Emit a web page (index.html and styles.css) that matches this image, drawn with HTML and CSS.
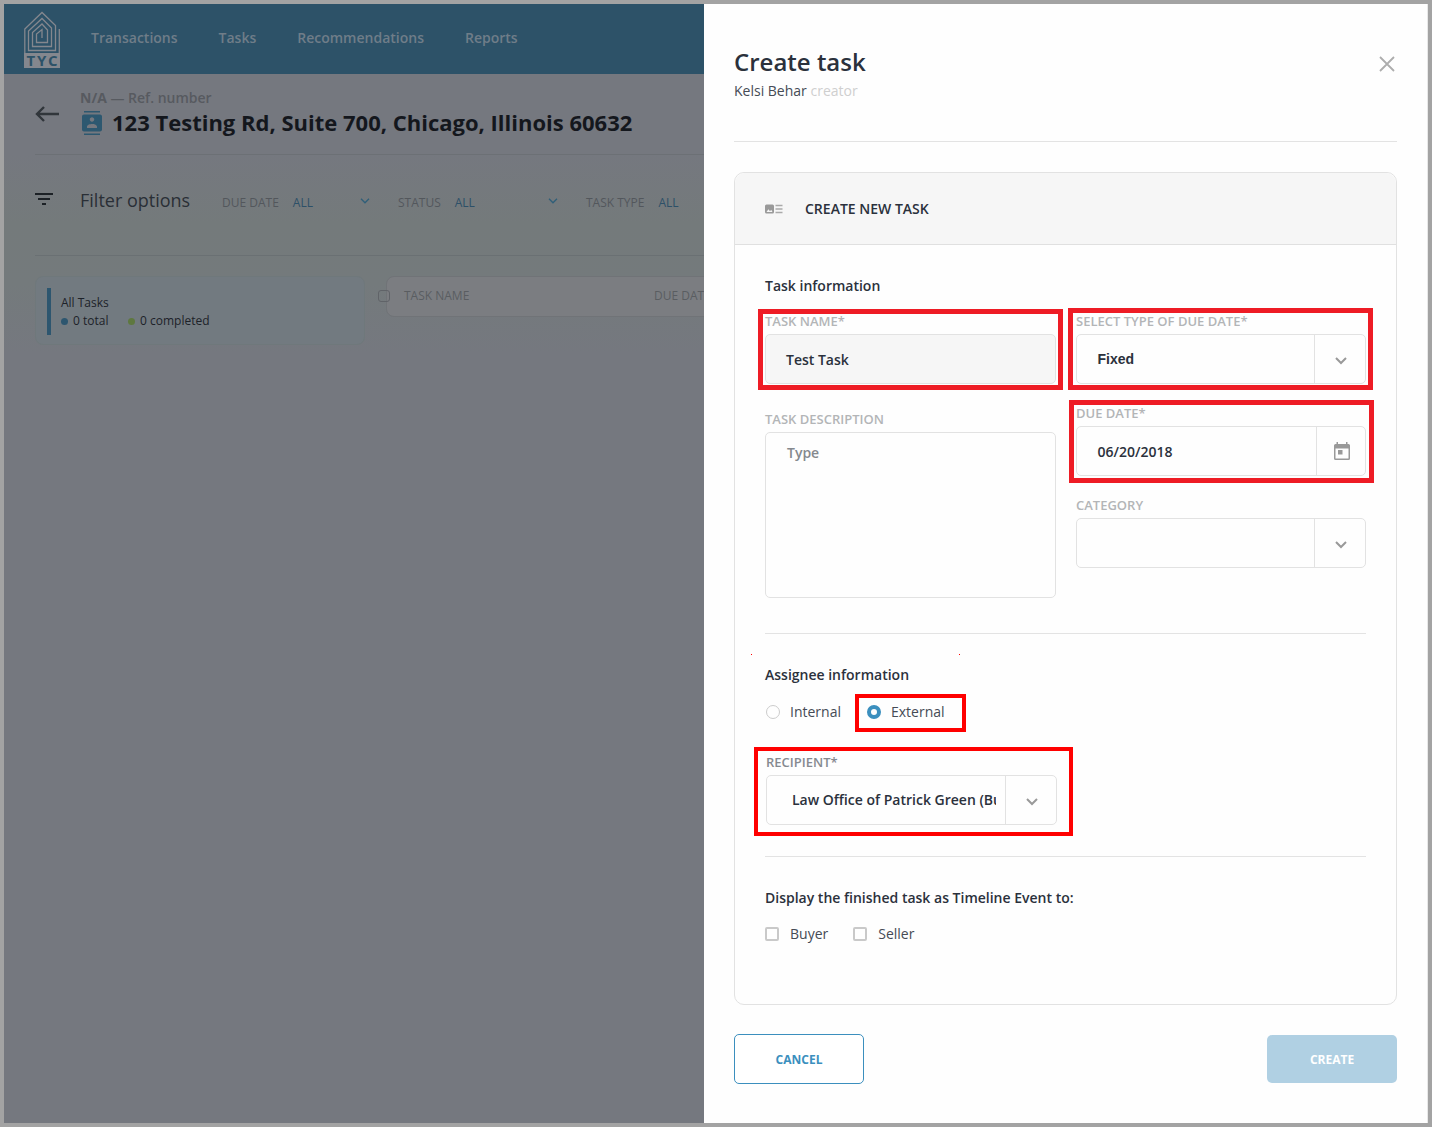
FILE: index.html
```html
<!DOCTYPE html>
<html lang="en">

<head>
    <meta charset="UTF-8">
    <meta name="viewport" content="width=device-width, initial-scale=1.0">
    <title>Create task</title>
    <link rel="stylesheet" href="styles.css">
</head>

<body>

    <div class="page">
        <main class="main">
            <nav class="nav">
                <svg class="logo" width="36" height="58" viewBox="0 0 36 58">
                    <g fill="none" stroke="#84878e" stroke-width="1.3">
                        <path d="M.8 43V18L18 1.500 31.500 14.500V39.500H4.500V20L18 7.500 27.500 17V35.500H8.500V21.500L18 13 23.500 19V31.500H12.500V23L18 18.500V27" />
                        <path d="M35.300 18V43" />
                    </g>
                    <rect y="42" width="36" height="15" fill="#84878e" />
                    <text x="2.500" y="55" textLength="31" class="logo-text">TYC</text>
                </svg>
                <a class="nav-item">Transactions</a>
                <a class="nav-item">Tasks</a>
                <a class="nav-item">Recommendations</a>
                <a class="nav-item">Reports</a>
            </nav>

            <header class="heading">
                <svg class="back" width="25" height="18" viewBox="0 0 25 18">
                    <path d="M9 2L2 9l7 7M2 9h22" fill="none" stroke="#31363b" stroke-width="2.400" />
                </svg>
                <div>
                    <div class="ref"><b>N/A</b> — Ref. number</div>
                    <div class="address">
                        <svg width="24" height="24" viewBox="0 0 24 24">
                            <path d="M20 0H4v1.500h16V0zM4 24h16v-1.500H4V24zM20 3.500H4c-1.100 0-2 .9-2 2v13c0 1.100.9 2 2 2h16c1.100 0 2-.9 2-2v-13c0-1.100-.9-2-2-2zm-8 2.750c1.240 0 2.250 1.010 2.250 2.250s-1.010 2.250-2.250 2.250S9.750 9.740 9.750 8.500 10.760 6.250 12 6.250zM17 17H7v-1.500c0-1.670 3.330-2.500 5-2.500s5 .83 5 2.500V17z" fill="#2d5870" />
                        </svg>
                        <span>123 Testing Rd, Suite 700, Chicago, Illinois 60632</span>
                    </div>
                </div>
            </header>

            <section class="filters">
                <svg class="filter-icon" width="18" height="12" viewBox="0 0 18 12">
                    <path d="M0 0h18v2H0zM3 5h12v2H3zM7 10h4v2H7z" fill="#1c2126" />
                </svg>
                <span class="filter-title">Filter options</span>
                <div class="filter filter-due"><span>DUE DATE</span><b>ALL</b>
                    <svg width="10" height="6" viewBox="0 0 10 6"><path d="M1 .8l4 4 4-4" /></svg>
                </div>
                <div class="filter filter-status"><span>STATUS</span><b>ALL</b>
                    <svg width="10" height="6" viewBox="0 0 10 6"><path d="M1 .8l4 4 4-4" /></svg>
                </div>
                <div class="filter"><span>TASK TYPE</span><b>ALL</b></div>
            </section>

            <section class="tasks">
                <div class="summary">
                    <div class="summary-bar"></div>
                    <div>
                        <div>All Tasks</div>
                        <div class="counts">
                            <i class="dot"></i><span class="total">0 total</span>
                            <i class="dot dot-green"></i><span>0 completed</span>
                        </div>
                    </div>
                </div>
                <div class="table-head">
                    <i class="table-check"></i>
                    <span class="col-name">TASK NAME</span>
                    <span>DUE DATE</span>
                </div>
            </section>
        </main>

        <aside class="panel">
            <header class="panel-head">
                <div>
                    <h1>Create task</h1>
                    <div class="creator">Kelsi Behar <span>creator</span></div>
                </div>
                <svg class="close" width="16" height="16" viewBox="0 0 16 16">
                    <path d="M1 1l14 14M15 1L1 15" fill="none" stroke="#adadad" stroke-width="1.800" />
                </svg>
            </header>

            <div class="card">
                <div class="card-head">
                    <svg width="18" height="10" viewBox="0 0 18 10">
                        <path d="M1.500.5h6Q9 .5 9 2v6q0 1.500-1.500 1.500h-6Q0 9.500 0 8V2Q0 .5 1.500.5zM1.500 8h6L6.200 5.800 5 7.200 3.400 5.300z" fill="#999" fill-rule="evenodd" />
                        <path d="M10.500 1.500h7M10.500 5h7M10.500 8.500h7" stroke="#aaa" stroke-width="1.500" />
                    </svg>
                    <span>CREATE NEW TASK</span>
                </div>

                <div class="card-body">
                    <h2>Task information</h2>
                    <div class="columns">
                        <div class="column column-left">
                            <div class="field">
                                <label>TASK NAME*</label>
                                <div class="input input-filled">Test Task</div>
                                <div class="mark mark-name"></div>
                            </div>
                            <div class="field">
                                <label>TASK DESCRIPTION</label>
                                <div class="input textarea">Type</div>
                            </div>
                        </div>
                        <div class="column column-right">
                            <div class="field">
                                <label>SELECT TYPE OF DUE DATE*</label>
                                <div class="input">
                                    <span class="value value-fixed">Fixed</span>
                                    <span class="addon"><svg width="12" height="8" viewBox="0 0 12 8"><path d="M1 1l5 5 5-5" class="chevron" /></svg></span>
                                </div>
                                <div class="mark mark-type"></div>
                            </div>
                            <div class="field">
                                <label>DUE DATE*</label>
                                <div class="input">
                                    <span class="value">06/20/2018</span>
                                    <span class="addon addon-date"><svg width="16" height="18" viewBox="0 0 16 18">
                                        <path d="M14.500 2H13.500V0h-1.500v2H4V0H2.500v2H1.500Q0 2 0 3.500v13Q0 18 1.500 18h13q1.500 0 1.500-1.500v-13Q16 2 14.500 2zm0 14.500h-13V6.500h13zM4 8h4.500v4.500H4z" fill="#999" fill-rule="evenodd" /></svg></span>
                                </div>
                                <div class="mark mark-date"></div>
                            </div>
                            <div class="field">
                                <label>CATEGORY</label>
                                <div class="input">
                                    <span class="value"></span>
                                    <span class="addon"><svg width="12" height="8" viewBox="0 0 12 8"><path d="M1 1l5 5 5-5" class="chevron" /></svg></span>
                                </div>
                            </div>
                        </div>
                    </div>

                    <div class="group group-assignee">
                        <i class="speck speck-left"></i>
                        <i class="speck speck-right"></i>
                        <h2>Assignee information</h2>
                        <div class="options radios">
                            <div class="option"><i class="radio"></i>Internal</div>
                            <div class="option"><i class="radio radio-on"></i>External
                                <div class="mark mark-external"></div>
                            </div>
                        </div>
                        <div class="field recipient">
                            <label>RECIPIENT*</label>
                            <div class="input">
                                <span class="value value-recipient"><span>Law Office of Patrick Green (Bu</span></span>
                                <span class="addon"><svg width="12" height="8" viewBox="0 0 12 8"><path d="M1 1l5 5 5-5" class="chevron" /></svg></span>
                            </div>
                            <div class="mark mark-recipient"></div>
                        </div>
                    </div>

                    <div class="group group-display">
                        <h2>Display the finished task as Timeline Event to:</h2>
                        <div class="options checks">
                            <div class="option"><i class="checkbox"></i>Buyer</div>
                            <div class="option"><i class="checkbox"></i>Seller</div>
                        </div>
                    </div>
                </div>
            </div>

            <footer class="actions">
                <button class="btn btn-cancel">CANCEL</button>
                <button class="btn btn-create">CREATE</button>
            </footer>
        </aside>
    </div>

</body>

</html>
```

FILE: styles.css
```css
* {
    margin: 0;
    padding: 0;
    box-sizing: border-box;
}

body {
    font-family: "Open Sans", "Noto Sans", sans-serif;
    font-size: 14px;
    color: #2b313c;
}

svg {
    display: block;
    flex: none;
}

.page {
    display: flex;
    width: 1432px;
    height: 1127px;
    border: 4px solid #a3a3a3;
    overflow: hidden;
}

/* dimmed page behind the panel */
.main {
    width: 700px;
    overflow: hidden;
    background: linear-gradient(#75787f 150px, #747a7b 220px, #747a7c 280px, #75787f 350px);
}

.nav {
    display: flex;
    align-items: center;
    gap: 41px;
    height: 70px;
    padding-left: 20px;
    background: #2d5268;
}

.logo {
    margin: 2px -10px 0 0;
}

.logo-text {
    font-size: 15px;
    font-weight: 700;
    fill: #2d5268;
}

.nav-item {
    font-weight: 600;
    color: #6f7d88;
    margin-top: -4px;
}

.heading {
    display: flex;
    height: 81px;
    margin-left: 31px;
    padding-top: 14px;
    border-bottom: 1px solid #6c7075;
}

.back {
    margin: 17px 20px 0 0;
}

.ref {
    line-height: 20px;
    color: #575a60;
    font-weight: 600;
}

.ref b {
    font-weight: 700;
}

.address {
    display: flex;
    align-items: center;
    gap: 8px;
    height: 30px;
    font-size: 22px;
    font-weight: 700;
    color: #14171d;
    white-space: nowrap;
}

.address span {
    margin-top: -2px;
}

.filters {
    display: flex;
    align-items: center;
    height: 101px;
    margin-left: 31px;
    padding-bottom: 9px;
    border-bottom: 1px solid #6a7073;
    white-space: nowrap;
}

.filter-icon {
    margin: -4px 27px 0 0;
}

.filter-title {
    width: 142px;
    margin-top: -2px;
    font-size: 18px;
    color: #2a2f36;
}

.filter {
    display: flex;
    align-items: center;
    padding-top: 4px;
    font-size: 12px;
    color: #53575c;
}

.filter b {
    margin-left: 14px;
    font-weight: 400;
    color: #2d5068;
}

.filter svg {
    margin: -3px 0 0 auto;
    fill: none;
    stroke: #2f5f79;
    stroke-width: 1.3;
}

.filter-due {
    width: 148px;
    margin-right: 28px;
}

.filter-status {
    width: 160px;
    margin-right: 28px;
}

.tasks {
    display: flex;
    align-items: flex-start;
    gap: 21px;
    padding: 20px 0 0 31px;
}

.summary {
    display: flex;
    flex: none;
    gap: 10px;
    width: 330px;
    height: 69px;
    padding: 11px;
    border: 1px solid #6f787b;
    border-radius: 8px;
    background: #727a80;
    font-size: 12px;
    line-height: 18px;
    color: #1d2229;
}

.summary > div:last-child {
    padding-top: 6px;
}

.summary-bar {
    width: 4px;
    height: 47px;
    background: #2d566f;
}

.counts {
    display: flex;
    align-items: center;
}

.dot {
    width: 7px;
    height: 7px;
    margin-right: 5px;
    border-radius: 50%;
    background: #2d566f;
}

.dot-green {
    background: #5e783f;
}

.total {
    width: 55px;
}

.table-head {
    position: relative;
    display: flex;
    align-items: center;
    width: 400px;
    height: 41px;
    padding: 0 0 2px 17px;
    border: 1px solid #707377;
    border-radius: 8px;
    background: #7b7d81;
    font-size: 12px;
    color: #5a5d61;
    white-space: nowrap;
}

.table-check {
    position: absolute;
    left: -9px;
    top: 13px;
    width: 12px;
    height: 12px;
    border: 1px solid #606368;
    border-radius: 3px;
}

.col-name {
    width: 250px;
}

/* create task panel */
.panel {
    width: 724px;
    padding: 0 30px;
    border-right: 1px solid #e8e8e8;
    background: #fefefe;
}

.panel-head {
    display: flex;
    justify-content: space-between;
    height: 138px;
    padding: 41px 2px 0 0;
    border-bottom: 1px solid #e3e3e3;
}

h1 {
    font-size: 24px;
    line-height: 34px;
    font-weight: 600;
}

.creator {
    line-height: 20px;
    padding-top: 2px;
    color: #454b55;
}

.creator span {
    color: #cfcfcf;
}

.close {
    margin-top: 11px;
}

.card {
    height: 833px;
    margin-top: 30px;
    border: 1px solid #e2e2e2;
    border-radius: 10px;
}

.card-head {
    display: flex;
    align-items: center;
    gap: 22px;
    height: 72px;
    padding-left: 30px;
    border-bottom: 1px solid #e0e0e0;
    border-radius: 10px 10px 0 0;
    background: #f6f6f6;
    font-weight: 600;
}

.card-body {
    padding: 31px 30px 0;
}

h2 {
    font-size: 14px;
    line-height: 20px;
    font-weight: 600;
}

.columns {
    display: flex;
    gap: 20px;
    padding: 16px 0 35px;
}

.column {
    display: flex;
    flex-direction: column;
}

.column-left {
    width: 291px;
    gap: 26px;
}

.column-right {
    width: 290px;
    gap: 20px;
}

.field {
    position: relative;
}

label {
    display: block;
    height: 22px;
    font-size: 13px;
    line-height: 18px;
    font-weight: 600;
    color: #b3b5b7;
}

.input {
    display: flex;
    align-items: center;
    height: 50px;
    border: 1px solid #e2e2e2;
    border-radius: 5px;
    font-weight: 600;
}

.input-filled {
    padding-left: 20px;
    background: #f6f6f6;
}

.textarea {
    align-items: flex-start;
    height: 166px;
    padding: 10px 21px;
    color: #85898e;
}

.value {
    flex: 1;
    min-width: 0;
    padding-left: 20.5px;
}

.value-fixed {
    font-family: "Liberation Sans", Arial, sans-serif;
    font-weight: 700;
}

.value-recipient {
    padding: 0 9px 2px 25px;
}

.value-recipient span {
    display: block;
    overflow: hidden;
    white-space: nowrap;
}

.addon {
    display: flex;
    align-items: center;
    justify-content: center;
    width: 51px;
    height: 48px;
    padding: 4px 0 0 2px;
    border-left: 1px solid #e2e2e2;
}

.addon-date {
    width: 49px;
    padding: 0 0 0 2px;
}

.chevron {
    fill: none;
    stroke: #999;
    stroke-width: 2;
}

.group {
    position: relative;
    padding-top: 31px;
    border-top: 1px solid #e3e3e3;
}

.group-assignee {
    height: 223px;
}

.options {
    display: flex;
    line-height: 20px;
    color: #454b55;
}

.radios {
    gap: 26px;
    margin: 17px 0 31px 1px;
}

.checks {
    gap: 25px;
    margin-top: 16px;
}

.option {
    position: relative;
    display: flex;
    align-items: center;
}

.radio {
    width: 14px;
    height: 14px;
    margin-right: 10px;
    border: 1px solid #ccc;
    border-radius: 50%;
}

.radio-on {
    border: 4px solid #3b8fbe;
}

.checkbox {
    width: 14px;
    height: 14px;
    margin-right: 11px;
    border: 2px solid #c9c9c9;
    border-radius: 2px;
}

.recipient {
    width: 291px;
    margin-left: 1px;
}

.recipient label {
    color: #868a90;
}

/* red marks round the required fields */
.mark {
    position: absolute;
    border: 5px solid #ee1c25;
}

.mark-name {
    left: -7px;
    top: -3px;
    width: 305px;
    height: 81px;
}

.mark-type {
    left: -8px;
    top: -4px;
    width: 305px;
    height: 82px;
}

.mark-date {
    left: -7px;
    top: -4px;
    width: 305px;
    height: 83px;
}

.mark-external {
    left: -12px;
    top: -8px;
    width: 111px;
    height: 38px;
    border: 4px solid #f00;
}

.mark-recipient {
    left: -12px;
    top: -6px;
    width: 319px;
    height: 89px;
    border: 4px solid #f00;
}

.speck {
    position: absolute;
    top: 20px;
    width: 1px;
    height: 1px;
    background: #f00;
}

.speck-left {
    left: -14px;
}

.speck-right {
    left: 194px;
}

.actions {
    display: flex;
    justify-content: space-between;
    align-items: center;
    margin-top: 29px;
}

.btn {
    width: 130px;
    height: 50px;
    border-radius: 5px;
    font-family: inherit;
    font-size: 12px;
    font-weight: 700;
}

.btn-cancel {
    border: 1px solid #3b8fbe;
    background: #fff;
    color: #3b8fbe;
}

.btn-create {
    height: 48px;
    border: none;
    background: #b0d0e3;
    color: #fff;
}
```
